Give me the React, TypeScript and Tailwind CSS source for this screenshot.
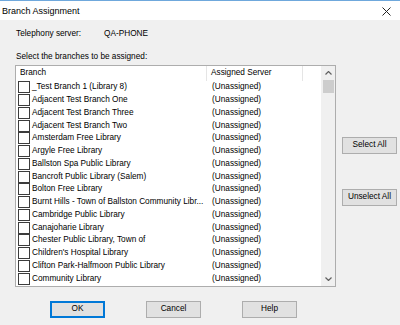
import React from "react";

const branches = [
  "_Test Branch 1 (Library 8)",
  "Adjacent Test Branch One",
  "Adjacent Test Branch Three",
  "Adjacent Test Branch Two",
  "Amsterdam Free Library",
  "Argyle Free Library",
  "Ballston Spa Public Library",
  "Bancroft Public Library (Salem)",
  "Bolton Free Library",
  "Burnt Hills - Town of Ballston Community Libr...",
  "Cambridge Public Library",
  "Canajoharie Library",
  "Chester Public Library, Town of",
  "Children's Hospital Library",
  "Clifton Park-Halfmoon Public Library",
  "Community Library",
];

function Btn({ label, def }: { label: string; def?: boolean }) {
  return (
    <div
      className={`w-[55px] h-[17px] flex items-center justify-center bg-[#e1e1e1] border ${
        def ? "border-[#0078d7] shadow-[inset_0_0_0_1px_#0078d7]" : "border-[#adadad]"
      } text-[8.25px] text-black`}
    >
      {label}
    </div>
  );
}

export default function App() {
  return (
    <div
      className="w-[400px] h-[325px] bg-[#f0f0f0] flex flex-col overflow-hidden text-black"
      style={{ fontFamily: '"Liberation Sans", Arial, sans-serif' }}
    >
      <div className="h-[20px] bg-white border-t border-[#6fa8dc] flex items-center justify-between pl-[2px] pr-[9px] shrink-0">
        <span className="text-[9px] leading-none mt-[1px]">Branch Assignment</span>
        <svg width="9" height="9" viewBox="0 0 9 9" className="mt-[1px]">
          <path d="M0.5 0.5 L8.5 8.5 M8.5 0.5 L0.5 8.5" stroke="#222" strokeWidth="1" />
        </svg>
      </div>

      <div className="flex items-center h-[10px] mt-[9px] pl-[16px] text-[8.25px] leading-none">
        <span className="w-[88px]">Telephony server:</span>
        <span>QA-PHONE</span>
      </div>

      <div className="h-[10px] mt-[13px] pl-[16px] text-[8.25px] leading-none flex items-center">
        Select the branches to be assigned:
      </div>

      <div className="flex mt-[3px] pl-[15px]">
        <div className="w-[321px] h-[222px] bg-white border border-[#adadad] flex overflow-hidden">
          <div className="flex-1 flex flex-col">
            <div className="h-[15px] flex text-[8.25px] leading-none shrink-0">
              <div className="w-[191px] border-r border-[#e5e5e5] flex items-center pl-[4px]">Branch</div>
              <div className="w-[96px] border-r border-[#e5e5e5] flex items-center pl-[4px]">Assigned Server</div>
              <div className="flex-1" />
            </div>
            {branches.map((b) => (
              <div key={b} className="h-[12.75px] flex items-center text-[8.25px] leading-none shrink-0">
                <div className="w-[191px] flex items-center pl-[2px]">
                  <div className="w-[12px] h-[12px] border border-[#3c3c3c] bg-white shrink-0" />
                  <span className="ml-[2px] whitespace-nowrap">{b}</span>
                </div>
                <div className="pl-[5px] whitespace-nowrap">(Unassigned)</div>
              </div>
            ))}
          </div>
          <div className="w-[14px] bg-[#f0f0f0] flex flex-col items-center shrink-0">
            <div className="h-[14px] w-full flex items-center justify-center">
              <svg width="7" height="4" viewBox="0 0 7 4">
                <path d="M0.5 3.5 L3.5 0.5 L6.5 3.5" stroke="#606060" strokeWidth="1.2" fill="none" />
              </svg>
            </div>
            <div className="w-[11px] h-[13px] bg-[#cdcdcd]" />
            <div className="flex-1" />
            <div className="h-[14px] w-full flex items-center justify-center">
              <svg width="7" height="4" viewBox="0 0 7 4">
                <path d="M0.5 0.5 L3.5 3.5 L6.5 0.5" stroke="#606060" strokeWidth="1.2" fill="none" />
              </svg>
            </div>
          </div>
        </div>
        <div className="flex flex-col ml-[6px] pt-[72px] gap-[35px]">
          <Btn label="Select All" />
          <Btn label="Unselect All" />
        </div>
      </div>

      <div className="flex pl-[50px] gap-[41px] mt-[14px]">
        <Btn label="OK" def />
        <Btn label="Cancel" />
        <Btn label="Help" />
      </div>
    </div>
  );
}
